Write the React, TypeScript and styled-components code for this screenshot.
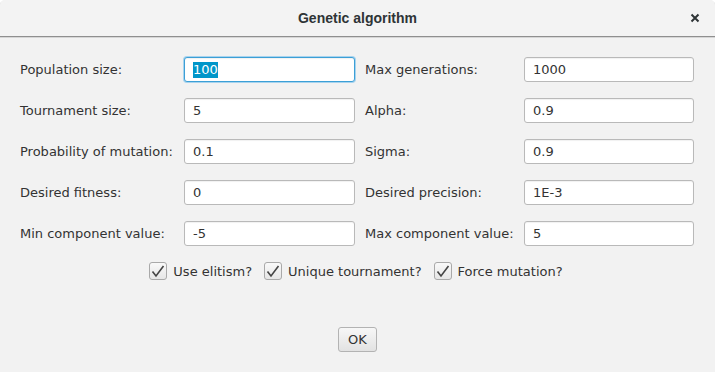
import { createGlobalStyle } from 'styled-components';
import styled from 'styled-components';

const GlobalStyle = createGlobalStyle`
  html, body {
    margin: 0;
    padding: 0;
    background: #ffffff;
  }
  * {
    box-sizing: border-box;
  }
`;

const Window = styled.div`
  width: 715px;
  height: 372px;
  display: flex;
  flex-direction: column;
  background: #f2f2f2;
  border-radius: 5px 5px 0 0;
  overflow: hidden;
  font-family: 'DejaVu Sans', 'Noto Sans', sans-serif;
  font-size: 13px;
  color: #333333;
`;

const TitleBar = styled.div`
  height: 37px;
  flex-shrink: 0;
  display: flex;
  align-items: center;
  justify-content: center;
  position: relative;
  background: #f3f3f3;
  border-bottom: 1px solid #8f8f8f;
  box-shadow: 0 1px 0 #d6d6d6;
`;

const Title = styled.div`
  font-family: 'Liberation Sans', Arial, sans-serif;
  font-weight: bold;
  font-size: 14px;
  color: #2e3436;
  margin-top: -1px;
`;

const CloseButton = styled.div`
  position: absolute;
  right: 15px;
  top: 13px;
  width: 10px;
  height: 10px;
  display: flex;
`;

const Content = styled.div`
  flex: 1;
  display: flex;
  flex-direction: column;
  padding: 20px 21px 0 20px;
`;

const FormGrid = styled.div`
  display: grid;
  grid-template-columns: 154px 171px 149px 170px;
  grid-auto-rows: 25px;
  column-gap: 10px;
  row-gap: 16px;
  align-items: center;
`;

const Label = styled.div`
  white-space: nowrap;
  color: #333333;
`;

const Field = styled.div<{ focused?: boolean }>`
  height: 25px;
  display: flex;
  align-items: center;
  padding-left: 8px;
  background: #ffffff;
  border: 1px solid ${(p) => (p.focused ? '#3c9fd6' : '#b9b9b9')};
  border-radius: 3px;
  box-shadow: ${(p) =>
    p.focused ? '0 0 0 1px #a7d3ee, inset 0 1px 1px rgba(0,0,0,0.06)' : 'inset 0 1px 1px rgba(0,0,0,0.06)'};
  color: #333333;
`;

const Selected = styled.span`
  background: #0096c9;
  color: #ffffff;
  line-height: 16px;
`;

const CheckRow = styled.div`
  display: flex;
  justify-content: center;
  align-items: center;
  gap: 12px;
  margin-top: 16px;
  padding-right: 2px;
`;

const CheckItem = styled.label`
  display: flex;
  align-items: center;
  gap: 6px;
  white-space: nowrap;
`;

const Box = styled.span`
  width: 18px;
  height: 18px;
  display: flex;
  align-items: center;
  justify-content: center;
  border: 1px solid #a9a9a9;
  border-radius: 3px;
  background: linear-gradient(#f9f9f9, #e6e6e6);
`;

const ButtonRow = styled.div`
  display: flex;
  justify-content: center;
  margin-top: 47px;
`;

const Button = styled.button`
  height: 25px;
  padding: 0 9px;
  margin-left: 1px;
  font-family: 'DejaVu Sans', 'Noto Sans', sans-serif;
  font-size: 13px;
  color: #333333;
  border: 1px solid #b3b3b3;
  border-radius: 3px;
  background: linear-gradient(#f7f7f7, #e2e2e2);
`;

const fields: Array<[string, string, string, string]> = [
  ['Population size:', '100', 'Max generations:', '1000'],
  ['Tournament size:', '5', 'Alpha:', '0.9'],
  ['Probability of mutation:', '0.1', 'Sigma:', '0.9'],
  ['Desired fitness:', '0', 'Desired precision:', '1E-3'],
  ['Min component value:', '-5', 'Max component value:', '5'],
];

const checks = ['Use elitism?', 'Unique tournament?', 'Force mutation?'];

const CheckMark = () => (
  <svg width="14" height="13" viewBox="0 0 14 13">
    <path d="M1.5 6.5 L5 11 L12.5 1" fill="none" stroke="#444" strokeWidth="1.6" />
  </svg>
);

export default function App() {
  return (
    <>
      <GlobalStyle />
      <Window>
        <TitleBar>
          <Title>Genetic algorithm</Title>
          <CloseButton>
            <svg width="10" height="10" viewBox="0 0 10 10">
              <path d="M1.5 1.5 L8.5 8.5 M8.5 1.5 L1.5 8.5" stroke="#2e3436" strokeWidth="2" />
            </svg>
          </CloseButton>
        </TitleBar>
        <Content>
          <FormGrid>
            {fields.map(([l1, v1, l2, v2], i) => [
              <Label key={l1}>{l1}</Label>,
              <Field key={l1 + 'f'} focused={i === 0}>
                {i === 0 ? <Selected>{v1}</Selected> : v1}
              </Field>,
              <Label key={l2}>{l2}</Label>,
              <Field key={l2 + 'f'}>{v2}</Field>,
            ])}
          </FormGrid>
          <CheckRow>
            {checks.map((c) => (
              <CheckItem key={c}>
                <Box>
                  <CheckMark />
                </Box>
                {c}
              </CheckItem>
            ))}
          </CheckRow>
          <ButtonRow>
            <Button>OK</Button>
          </ButtonRow>
        </Content>
      </Window>
    </>
  );
}
